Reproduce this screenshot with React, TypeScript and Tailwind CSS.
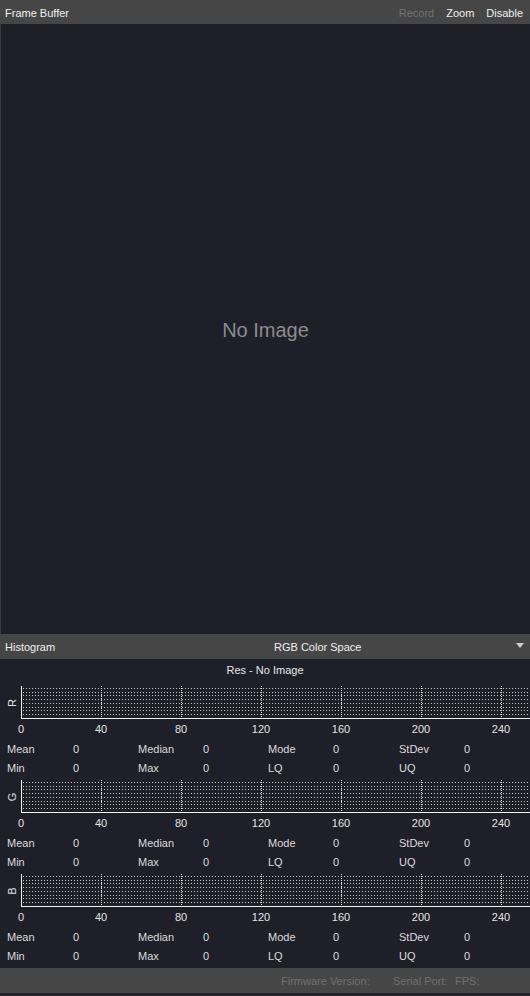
import React from "react";

const FONT = { fontFamily: '"Liberation Sans", Arial, sans-serif' };

const TICKS = [0, 40, 80, 120, 160, 200, 240];
const ROWS = [5, 9, 12, 16, 20, 24, 27, 31];

function Chart({ channel }: { channel: string }) {
  // x = 21 + 2 * value; chart top at 3, axis at 35
  return (
    <svg width={530} height={56} className="block">
      {ROWS.map((y) => (
        <line
          key={y}
          x1={23}
          x2={530}
          y1={y + 0.5}
          y2={y + 0.5}
          stroke="#c4c4c8"
          strokeWidth={1}
          strokeDasharray="1 2"
        />
      ))}
      {TICKS.slice(1).map((t) => (
        <line
          key={t}
          x1={21 + t * 2 + 0.5}
          x2={21 + t * 2 + 0.5}
          y1={3}
          y2={35}
          stroke="#e6e6e6"
          strokeWidth={1}
          strokeDasharray="1 1"
        />
      ))}
      <line x1={21.5} x2={21.5} y1={3} y2={36} stroke="#f2f2f2" strokeWidth={1} />
      <line x1={21} x2={530} y1={35.5} y2={35.5} stroke="#f2f2f2" strokeWidth={1} />
      <text
        x={0}
        y={0}
        transform="translate(16 20) rotate(-90)"
        textAnchor="middle"
        fill="#e0e0e0"
        fontSize={11}
        style={FONT}
      >
        {channel}
      </text>
      {TICKS.map((t) => (
        <text
          key={t}
          x={21 + t * 2}
          y={50}
          textAnchor="middle"
          fill="#e4e4e4"
          fontSize={11}
          style={FONT}
        >
          {t}
        </text>
      ))}
    </svg>
  );
}

function StatRow({ cells }: { cells: [string, string][] }) {
  return (
    <div className="grid grid-cols-[66px_65px_65px_65px_65px_66px_65px_65px] pl-[7px] pt-[1px] h-[19px] items-center text-[11px] text-[#dcdcdc] leading-[13px]">
      {cells.flatMap(([k, v]) => [
        <span key={k}>{k}</span>,
        <span key={k + "v"}>{v}</span>,
      ])}
    </div>
  );
}

function Channel({ name }: { name: string }) {
  return (
    <div>
      <Chart channel={name} />
      <StatRow
        cells={[
          ["Mean", "0"],
          ["Median", "0"],
          ["Mode", "0"],
          ["StDev", "0"],
        ]}
      />
      <StatRow
        cells={[
          ["Min", "0"],
          ["Max", "0"],
          ["LQ", "0"],
          ["UQ", "0"],
        ]}
      />
    </div>
  );
}

export default function App() {
  return (
    <div
      className="w-[530px] h-[996px] flex flex-col bg-[#1e1f29] overflow-hidden text-[11px]"
      style={FONT}
    >
      {/* frame buffer header */}
      <div className="h-[24px] shrink-0 bg-[#464646] flex items-center justify-between pl-[5px] pr-[7px] pt-[2px] text-[#f0f0f0]">
        <span>Frame Buffer</span>
        <div className="flex items-center gap-[12px]">
          <span className="text-[#727272]">Record</span>
          <span>Zoom</span>
          <span>Disable</span>
        </div>
      </div>

      <div className="h-[610px] shrink-0 flex items-center justify-center border-l border-[#3a3a40]">
        <span className="text-[20px] text-[#8c8c8c] pt-[2px]">No Image</span>
      </div>

      {/* histogram header */}
      <div className="h-[25px] shrink-0 bg-[#464646] flex items-center pl-[5px] pr-[5px] pt-[2px] text-[#f0f0f0]">
        <span className="w-[269px]">Histogram</span>
        <span className="flex-1">RGB Color Space</span>
        <svg width={8} height={5} className="mr-[1px] -mt-[4px]">
          <path d="M0 0 L8 0 L4 5 Z" fill="#cfcfcf" />
        </svg>
      </div>

      <div className="h-[24px] shrink-0 pt-[5px] leading-[13px] text-center text-[#e8e8e8]">
        Res - No Image
      </div>

      <Channel name="R" />
      <Channel name="G" />
      <Channel name="B" />

      <div className="h-[3px] shrink-0" />

      {/* status bar */}
      <div className="h-[25px] shrink-0 bg-[#464646] flex items-center pt-[2px] text-[#707070] pl-[281px]">
        <span className="w-[112px]">Firmware Version:</span>
        <span className="w-[62px]">Serial Port:</span>
        <span>FPS:</span>
      </div>
      <div className="flex-1 bg-[#25252b]" />
    </div>
  );
}
